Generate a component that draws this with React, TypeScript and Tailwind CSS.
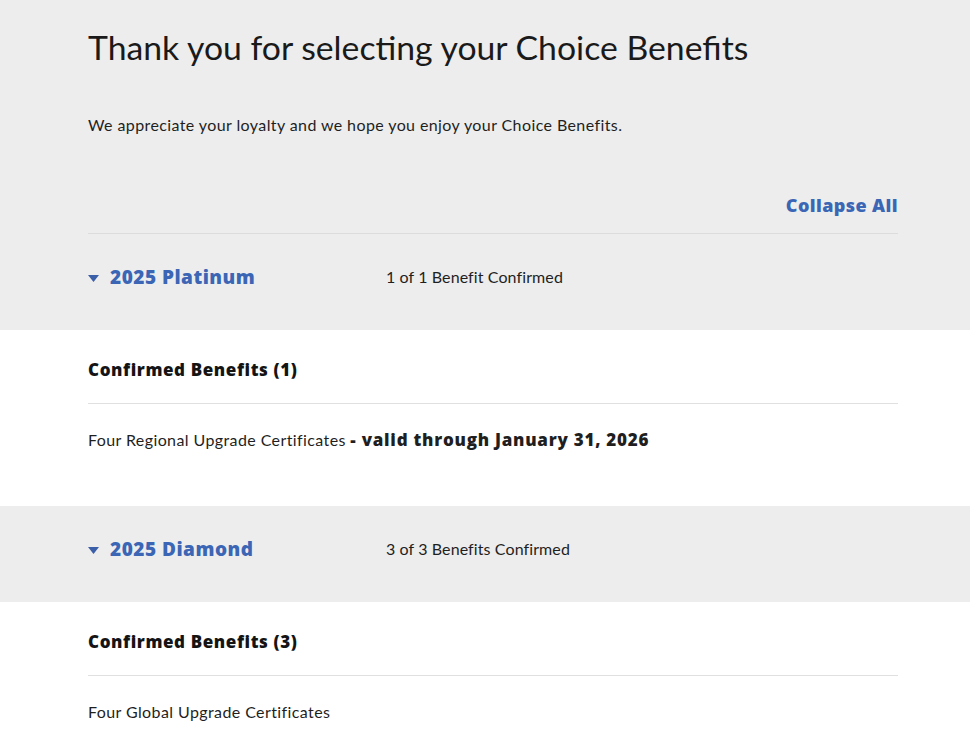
import React from "react";

const font = { fontFamily: "Lato, 'Open Sans', sans-serif" };
const boldFont = { fontFamily: "'Open Sans', Lato, sans-serif" };

function Caret() {
  return (
    <svg width="11" height="7" viewBox="0 0 11 7" className="mr-[11px] mt-[2px]">
      <polygon points="0,0 11,0 5.5,7" fill="#3b5fa8" />
    </svg>
  );
}

function TierHeader({ title, status }: { title: string; status: string }) {
  return (
    <div className="flex items-center h-[96px] pb-[10px]">
      <div className="flex items-center w-[298px]">
        <Caret />
        <span style={boldFont} className="text-[19px] leading-[24px] font-extrabold tracking-[0.5px] text-[#3b66b5]">{title}</span>
      </div>
      <span className="text-[16px] leading-[24px] tracking-[0.1px] text-[#1f1f1f]">{status}</span>
    </div>
  );
}

function Confirmed({ count, children, pb }: { count: number; children: React.ReactNode; pb: string }) {
  return (
    <div className={`bg-white ${pb}`}>
      <div className="pl-[88px] w-[898px]">
        <div className="pt-[28px] pb-[21px] border-b border-[#e0e0e0]">
          <span style={boldFont} className="text-[17px] leading-[24px] font-extrabold tracking-[0.6px] text-[#141414]">Confirmed Benefits ({count})</span>
        </div>
        <div className="pt-[24px] text-[16px] leading-[24px] tracking-[0.4px] text-[#1f1f1f]">{children}</div>
      </div>
    </div>
  );
}

export default function App() {
  return (
    <div style={font} className="w-[970px] min-h-[734px] bg-white overflow-hidden">
      <div className="bg-[#ededed]">
        <div className="pl-[88px] w-[898px] pt-[27px]">
          <h1 className="text-[33.75px] leading-[40px] font-normal text-[#1a1a1a]">Thank you for selecting your Choice Benefits</h1>
          <p className="mt-[46px] text-[16px] leading-[24px] tracking-[0.4px] text-[#1f1f1f]">
            We appreciate your loyalty and we hope you enjoy your Choice Benefits.
          </p>
          <div className="mt-[56px] flex justify-end pb-[16px] border-b border-[#dcdcdc]">
            <span style={boldFont} className="text-[18px] leading-[24px] font-extrabold tracking-[0.4px] text-[#3b66b5]">Collapse All</span>
          </div>
          <TierHeader title="2025 Platinum" status="1 of 1 Benefit Confirmed" />
        </div>
      </div>
      <Confirmed count={1} pb="pb-[54px]">
        Four Regional Upgrade Certificates{" "}
        <span style={boldFont} className="text-[17px] font-extrabold tracking-[0.75px]">- valid through January 31, 2026</span>
      </Confirmed>
      <div className="bg-[#ededed]">
        <div className="pl-[88px] w-[898px]">
          <TierHeader title="2025 Diamond" status="3 of 3 Benefits Confirmed" />
        </div>
      </div>
      <Confirmed count={3} pb="pb-[54px]">
        Four Global Upgrade Certificates
      </Confirmed>
    </div>
  );
}
